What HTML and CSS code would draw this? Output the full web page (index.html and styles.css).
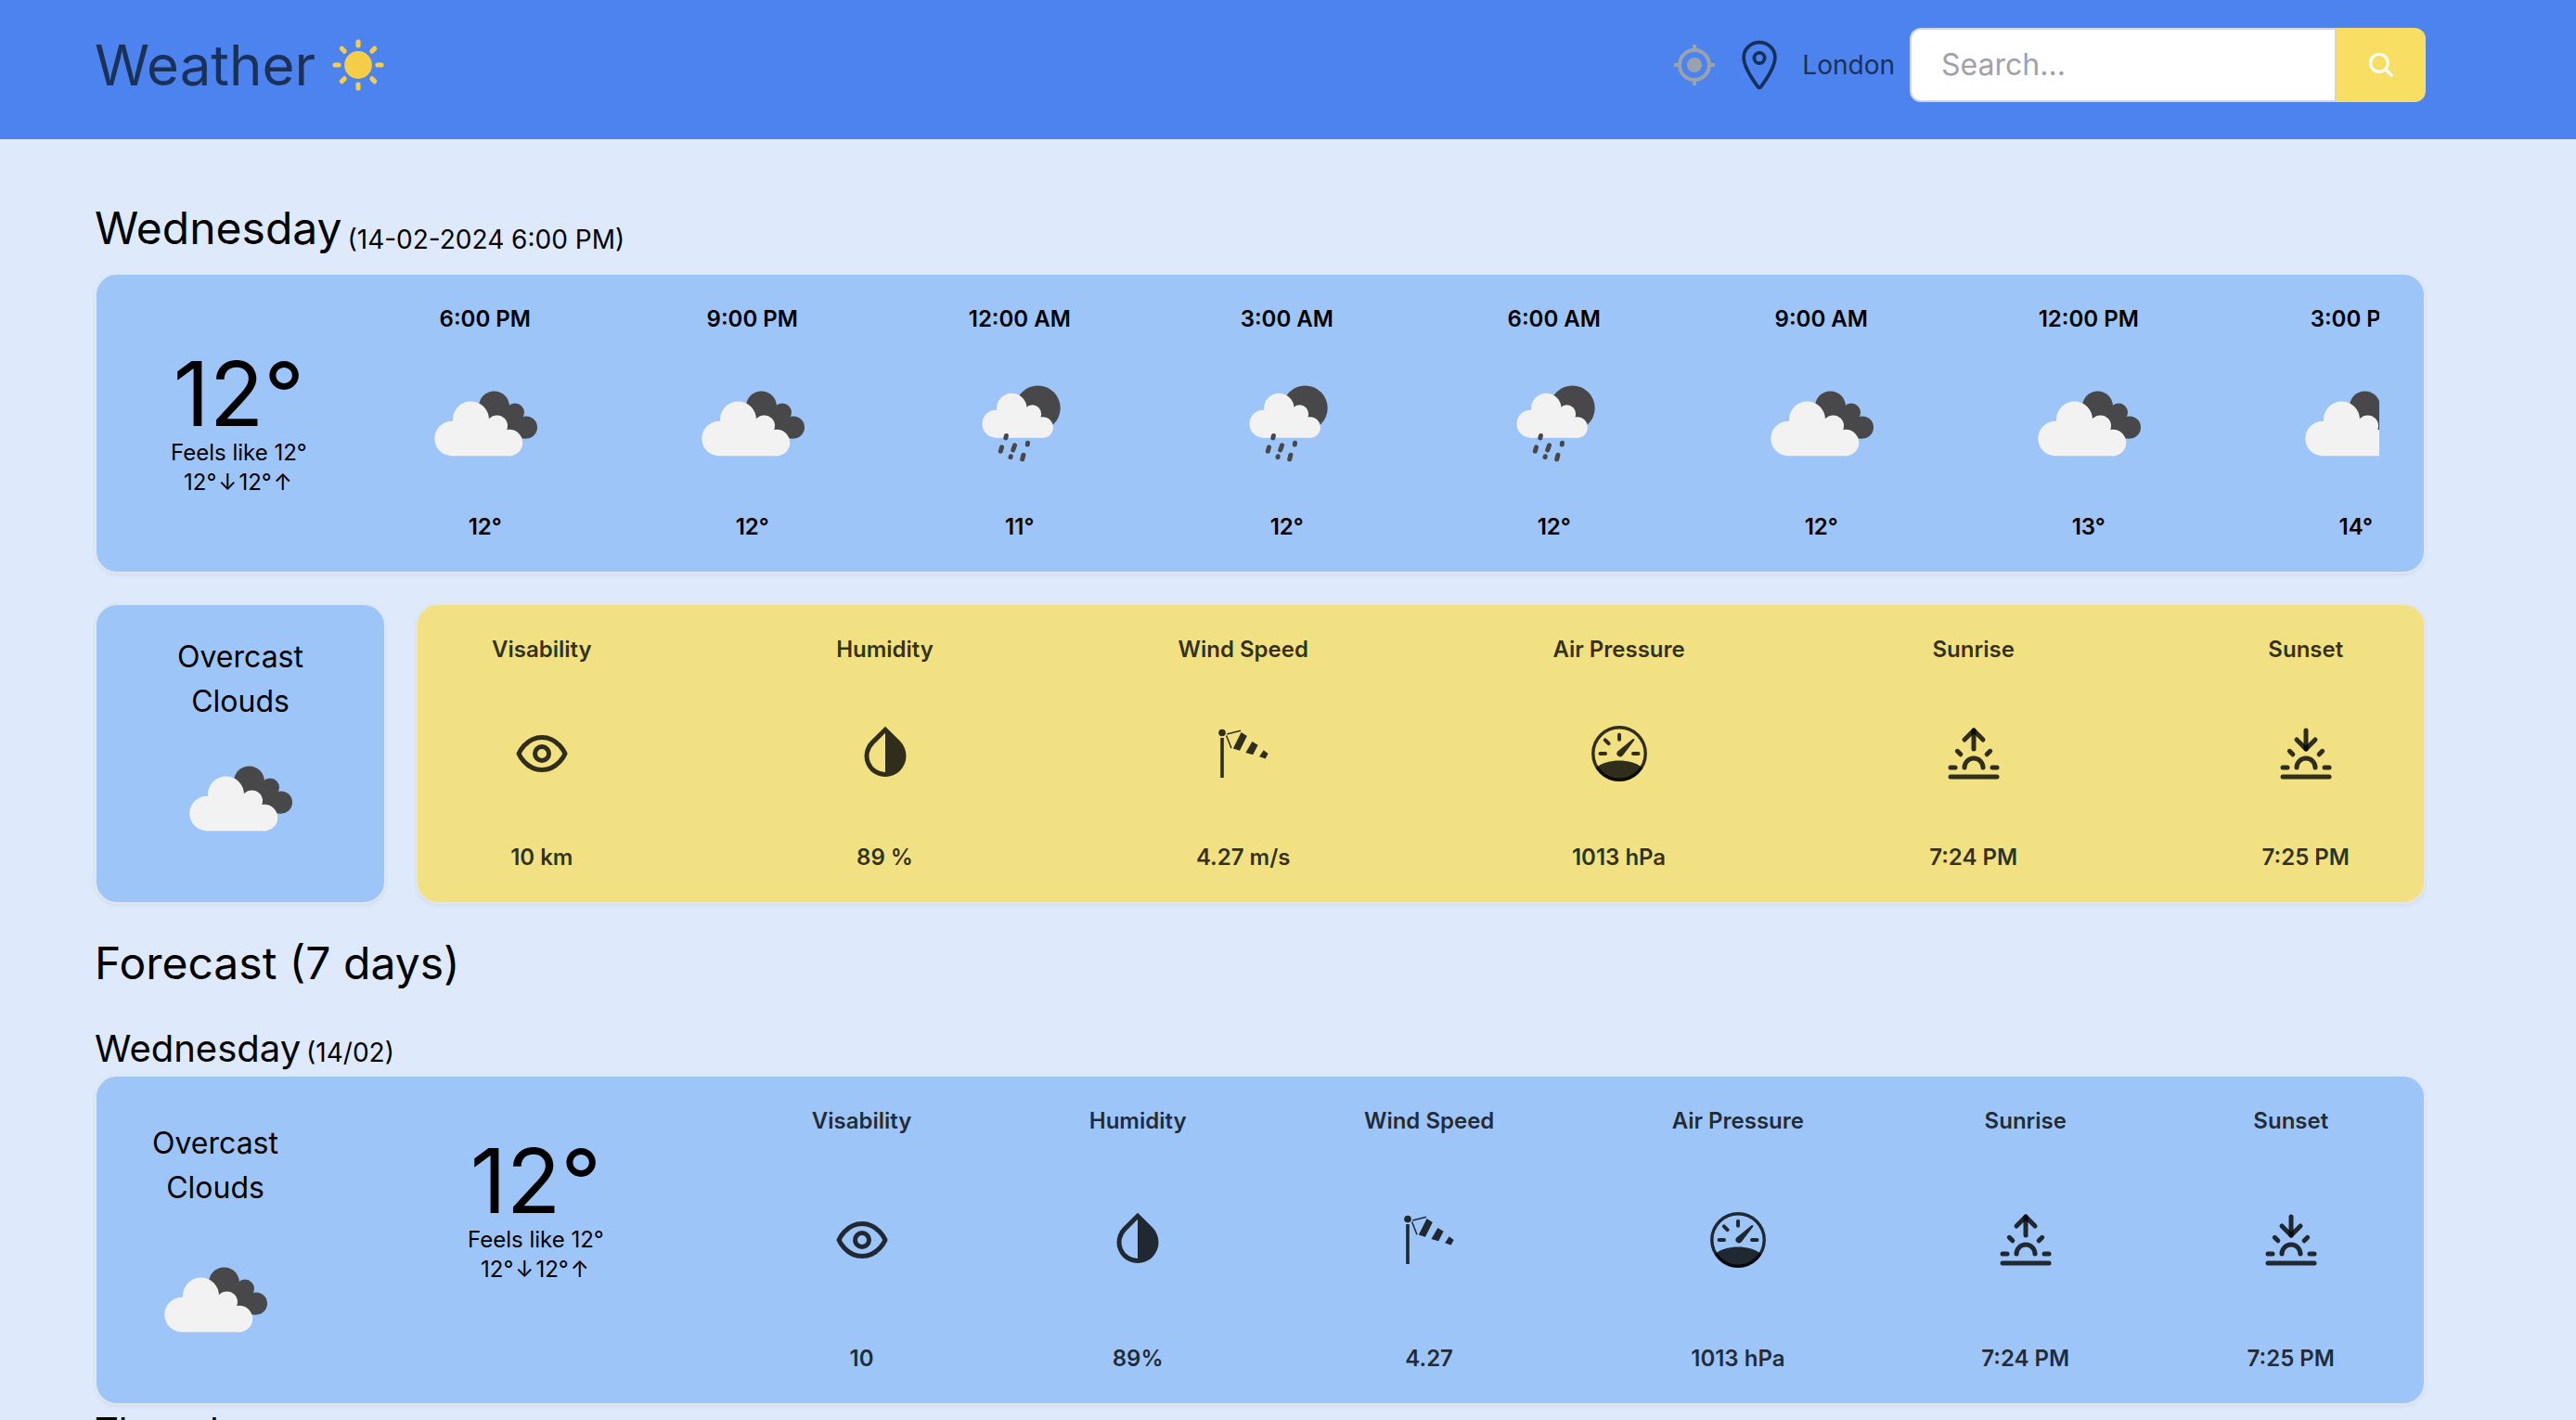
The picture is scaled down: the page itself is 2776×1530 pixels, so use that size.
FILE: index.html
```html
<!DOCTYPE html>
<html lang="en">
<head>
<meta charset="utf-8">
<meta name="viewport" content="width=device-width, initial-scale=1">
<title>Weather</title>
<link rel="stylesheet" href="styles.css">
</head>
<body>
<svg class="sprite" aria-hidden="true">
  <symbol id="clouds" viewBox="0 1 160 160">
    <g fill="#48484a">
      <circle cx="89.500" cy="63" r="16.500"/><circle cx="112" cy="69.500" r="10"/><circle cx="124" cy="85.500" r="12"/>
      <path d="M89 60L112 70L124 80V97.500H89z"/>
    </g>
    <g fill="#f2f2f2">
      <circle cx="44" cy="97.500" r="18.700"/><circle cx="64.500" cy="77" r="19.500"/><circle cx="92.500" cy="84" r="11.500"/><circle cx="106" cy="102" r="14.200"/>
      <path d="M44 80H70L96 76L104 90L108 100V116.200H44z"/>
    </g>
  </symbol>
  <symbol id="rain-night" viewBox="0 1 160 160">
    <circle cx="99.500" cy="64.700" r="24.200" fill="#48484a"/>
    <g fill="#f2f2f2">
      <circle cx="54.500" cy="81.700" r="15"/><circle cx="71.300" cy="64.900" r="16.200"/><circle cx="93.500" cy="71" r="9.700"/><circle cx="104.700" cy="85.500" r="11.200"/>
      <path d="M54 68H76L96 64L102 76L106 84V96.700H54z"/>
    </g>
    <g stroke="#48484a" stroke-width="5" stroke-linecap="round">
      <path d="M65.400 94.500l-.6 2.400M60.500 106.800l-1.200 4.400M74.500 104.800l-1.800 5M88.500 102.200l-.2 1.800M70.200 116.800l-.2.800M83.900 115.200l-1.200 4.600"/>
    </g>
  </symbol>
  <symbol id="eye" viewBox="0 0 24 24">
    <g fill="none" stroke="currentColor" stroke-width="2" stroke-linecap="round" stroke-linejoin="round">
      <path d="M2 12s3-7 10-7 10 7 10 7-3 7-10 7-10-7-10-7Z"/><circle cx="12" cy="12" r="3"/>
    </g>
  </symbol>
  <symbol id="drop" viewBox="0 0 24 24">
    <path fill="currentColor" d="M5.636 6.636L12 .272l6.364 6.364a9 9 0 1 1-12.728 0zM12 20V3.100L7.050 8.050A7 7 0 0 0 12 20z"/>
  </symbol>
  <symbol id="windsock" viewBox="0 0 60 60">
    <g fill="currentColor">
      <circle cx="7" cy="7.500" r="3.800"/><path d="M5.200 13h3.600v43H5.200zM27.600 7l6.200 4L26 26.700l-7.200-2.100zM39.400 17l6.200 3.700-5.400 10.500-7.800-2.300zM51.700 26.300l4.900 3.700-2.900 5.400-6.600-2.100z"/>
    </g>
    <path d="M12.300 9L27 5.300M11.600 10.500L17 24.300" fill="none" stroke="currentColor" stroke-width="1.500"/>
  </symbol>
  <symbol id="gauge" viewBox="0 0 60 60">
    <circle cx="30" cy="30" r="28.200" fill="none" stroke="currentColor" stroke-width="3.400"/>
    <path d="M30 9.700v5M9.500 30h5.500M45 30h5.500M14.800 15.300l3.800 3.800" stroke="currentColor" stroke-width="4" stroke-linecap="round"/>
    <path d="M44.500 14.300c1.200-.8 2.400.2 1.700 1.500L34 31.800a3.600 3.600 0 0 1-6-4z" fill="currentColor"/>
    <path d="M5 45C12 39.500 21 37.400 30 37.400s18 2.100 25 7.600A28.500 28.500 0 0 1 5 45z" fill="currentColor"/>
  </symbol>
  <symbol id="sunrise" viewBox="0 0 24 24">
    <g fill="none" stroke="currentColor" stroke-width="2" stroke-linecap="round" stroke-linejoin="round">
      <path d="M12 2v8"/><path d="m4.930 10.930 1.410 1.410"/><path d="M2 18h2"/><path d="M20 18h2"/><path d="m19.070 10.930-1.410 1.410"/><path d="M22 22H2"/><path d="m8 6 4-4 4 4"/><path d="M16 18a4 4 0 0 0-8 0"/>
    </g>
  </symbol>
  <symbol id="sunset" viewBox="0 0 24 24">
    <g fill="none" stroke="currentColor" stroke-width="2" stroke-linecap="round" stroke-linejoin="round">
      <path d="M12 10V2"/><path d="m4.930 10.930 1.410 1.410"/><path d="M2 18h2"/><path d="M20 18h2"/><path d="m19.070 10.930-1.410 1.410"/><path d="M22 22H2"/><path d="m16 6-4 4-4-4"/><path d="M16 18a4 4 0 0 0-8 0"/>
    </g>
  </symbol>
</svg>

<header class="nav">
  <div class="brand">
    <h1 class="brand-name">Weather</h1>
    <svg class="icon brand-sun" viewBox="0 0 512 512" aria-hidden="true">
      <circle cx="256" cy="256" r="127" fill="currentColor"/>
      <path d="M256 43v34M256 435v34M406.600 105.400l-24 24M129.400 382.600l-24 24M469 256h-34M77 256H43M406.600 406.600l-24-24M129.400 129.400l-24-24" stroke="currentColor" stroke-width="44" stroke-linecap="round"/>
    </svg>
  </div>
  <div class="tools">
    <button class="locate" type="button" aria-label="Use current location">
      <svg viewBox="0 0 24 24" aria-hidden="true"><path fill="currentColor" d="M12 8c-2.210 0-4 1.790-4 4s1.790 4 4 4 4-1.790 4-4-1.790-4-4-4zm8.940 3A8.994 8.994 0 0 0 13 3.060V1h-2v2.060A8.994 8.994 0 0 0 3.060 11H1v2h2.060A8.994 8.994 0 0 0 11 20.940V23h2v-2.060A8.994 8.994 0 0 0 20.940 13H23v-2h-2.060zM12 19c-3.870 0-7-3.130-7-7s3.130-7 7-7 7 3.130 7 7-3.130 7-7 7z"/></svg>
    </button>
    <svg class="icon pin" viewBox="0 0 512 512" fill="none" stroke="currentColor" stroke-width="32" stroke-linecap="round" stroke-linejoin="round" aria-hidden="true">
      <path d="M256 48c-79.500 0-144 61.390-144 137 0 87 96 224.870 131.250 272.490a15.770 15.770 0 0 0 25.500 0C304 409.890 400 272.070 400 185c0-75.610-64.500-137-144-137z"/><circle cx="256" cy="192" r="48"/>
    </svg>
    <span class="place">London</span>
    <form class="search">
      <input class="search-box" type="text" placeholder="Search..." aria-label="Search location">
      <button class="search-button" type="submit" aria-label="Search">
        <svg viewBox="0 0 512 512" aria-hidden="true"><path fill="currentColor" d="M456.690 421.390 362.600 327.300a173.810 173.810 0 0 0 34.840-104.580C397.440 126.380 319.060 48 222.720 48S48 126.380 48 222.720s78.380 174.720 174.720 174.720A173.810 173.810 0 0 0 327.300 362.600l94.090 94.090a25 25 0 0 0 35.300-35.300zM97.920 222.720a124.800 124.800 0 1 1 124.800 124.800 124.950 124.950 0 0 1-124.800-124.800z"/></svg>
      </button>
    </form>
  </div>
</header>

<main class="page">
  <section class="stack">
    <h2 class="title">Wednesday <span class="title-note">(14-02-2024 6:00 PM)</span></h2>
    <div class="card today">
      <div class="temps">
        <span class="temp-now">12°</span>
        <span>Feels like 12°</span>
        <span>12°<span class="arrow">↓</span>12°<span class="arrow">↑</span></span>
      </div>
      <ul class="hours">
        <li class="hour"><span>6:00 PM</span><svg class="sky"><use href="#clouds"/></svg><span>12°</span></li>
        <li class="hour"><span>9:00 PM</span><svg class="sky"><use href="#clouds"/></svg><span>12°</span></li>
        <li class="hour"><span>12:00 AM</span><svg class="sky"><use href="#rain-night"/></svg><span>11°</span></li>
        <li class="hour"><span>3:00 AM</span><svg class="sky"><use href="#rain-night"/></svg><span>12°</span></li>
        <li class="hour"><span>6:00 AM</span><svg class="sky"><use href="#rain-night"/></svg><span>12°</span></li>
        <li class="hour"><span>9:00 AM</span><svg class="sky"><use href="#clouds"/></svg><span>12°</span></li>
        <li class="hour"><span>12:00 PM</span><svg class="sky"><use href="#clouds"/></svg><span>13°</span></li>
        <li class="hour"><span>3:00 PM</span><svg class="sky"><use href="#clouds"/></svg><span>14°</span></li>
      </ul>
    </div>
  </section>

  <section class="now">
    <div class="card summary">
      <p class="sky-name">Overcast Clouds</p>
      <svg class="sky"><use href="#clouds"/></svg>
    </div>
    <div class="card details card-yellow">
      <div class="detail"><span>Visability</span><svg class="icon"><use href="#eye"/></svg><span>10 km</span></div>
      <div class="detail"><span>Humidity</span><svg class="icon"><use href="#drop"/></svg><span>89 %</span></div>
      <div class="detail"><span>Wind Speed</span><svg class="icon"><use href="#windsock"/></svg><span>4.27 m/s</span></div>
      <div class="detail"><span>Air Pressure</span><svg class="icon"><use href="#gauge"/></svg><span>1013 hPa</span></div>
      <div class="detail"><span>Sunrise</span><svg class="icon"><use href="#sunrise"/></svg><span>7:24 PM</span></div>
      <div class="detail"><span>Sunset</span><svg class="icon"><use href="#sunset"/></svg><span>7:25 PM</span></div>
    </div>
  </section>

  <section class="forecast">
    <h2 class="title">Forecast (7 days)</h2>
    <div class="days">
      <h3 class="day-title">Wednesday <span class="day-note">(14/02)</span></h3>
      <div class="card day">
        <div class="day-sky">
          <p class="sky-name">Overcast Clouds</p>
          <svg class="sky"><use href="#clouds"/></svg>
        </div>
        <div class="temps day-temps">
          <span class="temp-now">12°</span>
          <span>Feels like 12°</span>
          <span>12°<span class="arrow">↓</span>12°<span class="arrow">↑</span></span>
        </div>
        <div class="details day-details">
          <div class="detail"><span>Visability</span><svg class="icon"><use href="#eye"/></svg><span>10</span></div>
          <div class="detail"><span>Humidity</span><svg class="icon"><use href="#drop"/></svg><span>89%</span></div>
          <div class="detail"><span>Wind Speed</span><svg class="icon"><use href="#windsock"/></svg><span>4.27</span></div>
          <div class="detail"><span>Air Pressure</span><svg class="icon"><use href="#gauge"/></svg><span>1013 hPa</span></div>
          <div class="detail"><span>Sunrise</span><svg class="icon"><use href="#sunrise"/></svg><span>7:24 PM</span></div>
          <div class="detail"><span>Sunset</span><svg class="icon"><use href="#sunset"/></svg><span>7:25 PM</span></div>
        </div>
      </div>
      <h3 class="day-title">Thursday</h3>
    </div>
  </section>
</main>
</body>
</html>
```
FILE: styles.css
```css
*,
*::before,
*::after {
  box-sizing: border-box;
}

body {
  margin: 0;
  height: 100vh;
  overflow: hidden;
  background: #dfe9fc;
  color: #000;
  font-family: Inter, "Liberation Sans", sans-serif;
  font-size: 24px;
  line-height: 32px;
}

h1,
h2,
h3,
p,
ul {
  margin: 0;
  padding: 0;
  font-weight: 400;
}

button {
  padding: 0;
  border: 0;
  background: none;
  cursor: pointer;
}

svg {
  display: block;
  flex-shrink: 0;
}

.sprite {
  display: none;
}

.icon {
  width: 60px;
  height: 60px;
}

.sky {
  width: 160px;
  height: 160px;
}

/* Top bar */

.nav {
  display: flex;
  justify-content: space-between;
  align-items: center;
  padding: 30px 162px 40px 102px;
  background: #4c83ee;
  color: #1b3158;
}

.brand,
.tools {
  display: flex;
  align-items: center;
  gap: 16px;
}

.brand-name {
  font-size: 60px;
  line-height: 72px;
}

.brand-sun {
  color: #f6cd46;
}

.locate {
  color: #9ba2ab;
}

.locate svg {
  width: 48px;
  height: 48px;
}

.pin {
  color: #16305c;
}

.place {
  font-size: 28px;
  line-height: 40px;
}

.search {
  display: flex;
  height: 80px;
}

.search-box {
  width: 460px;
  padding: 0 32px;
  border: 2px solid #d1d5db;
  border-radius: 12px 0 0 12px;
  background: #fff;
  color: #111;
  font: 400 32px/48px Inter, "Liberation Sans", sans-serif;
}

.search-box::placeholder {
  color: #9fa3a9;
  opacity: 1;
}

.search-button {
  display: flex;
  align-items: center;
  justify-content: center;
  width: 96px;
  border-radius: 0 12px 12px 0;
  background: #f8de63;
  color: #fff;
}

.search-button svg {
  width: 32px;
  height: 32px;
}

/* Page content */

.page {
  display: flex;
  flex-direction: column;
  gap: 32px;
  padding: 64px 162px 0 102px;
}

.stack {
  display: flex;
  flex-direction: column;
  gap: 16px;
}

.title {
  display: flex;
  align-items: flex-end;
  gap: 6px;
  font-size: 48px;
  line-height: 64px;
}

.title-note {
  font-size: 28px;
  line-height: 40px;
}

.card {
  display: flex;
  border: 2px solid #dde7ef;
  border-radius: 24px;
  background: #9ec5f8;
  box-shadow: 0 2px 4px rgba(0, 0, 0, 0.05);
}

.card-yellow {
  background: #f1e182;
  border-color: #e4e6e4;
}

.temps {
  display: flex;
  flex-direction: column;
  align-items: center;
  justify-content: center;
  flex-shrink: 0;
  padding: 0 32px;
}

.temp-now {
  font-size: 96px;
  line-height: 96px;
}

.arrow {
  padding: 0 2px;
}

.today {
  gap: 80px;
  padding: 32px 48px;
}

.hours {
  display: flex;
  flex: 1;
  gap: 128px;
  min-width: 0;
  overflow: hidden;
  list-style: none;
}

.hour {
  display: flex;
  flex-direction: column;
  align-items: center;
  gap: 16px;
  flex-shrink: 0;
  font-weight: 600;
}

.now {
  display: flex;
  gap: 32px;
}

.summary {
  flex-direction: column;
  align-items: center;
  width: 314px;
  padding: 32px 0;
}

.sky-name {
  width: 160px;
  font-size: 32px;
  line-height: 48px;
  text-align: center;
}

.details {
  display: flex;
  flex: 1;
  justify-content: space-between;
  padding: 32px 80px;
}

.detail {
  display: flex;
  flex-direction: column;
  align-items: center;
  justify-content: space-between;
  color: rgba(0, 0, 0, 0.8);
  font-weight: 600;
}

/* Forecast */

.forecast {
  display: flex;
  flex-direction: column;
  gap: 32px;
}

.day-title {
  display: flex;
  align-items: baseline;
  gap: 6px;
  font-size: 40px;
  line-height: 56px;
}

.day-note {
  font-size: 28px;
  line-height: 40px;
}

.day {
  gap: 160px;
  padding: 32px 48px;
}

.day-sky {
  display: flex;
  flex-direction: column;
  align-items: center;
  gap: 16px;
  padding-top: 16px;
}

.day-temps {
  justify-content: flex-start;
  padding-top: 32px;
}

.day-details {
  padding: 0 48px 0 32px;
}
```
